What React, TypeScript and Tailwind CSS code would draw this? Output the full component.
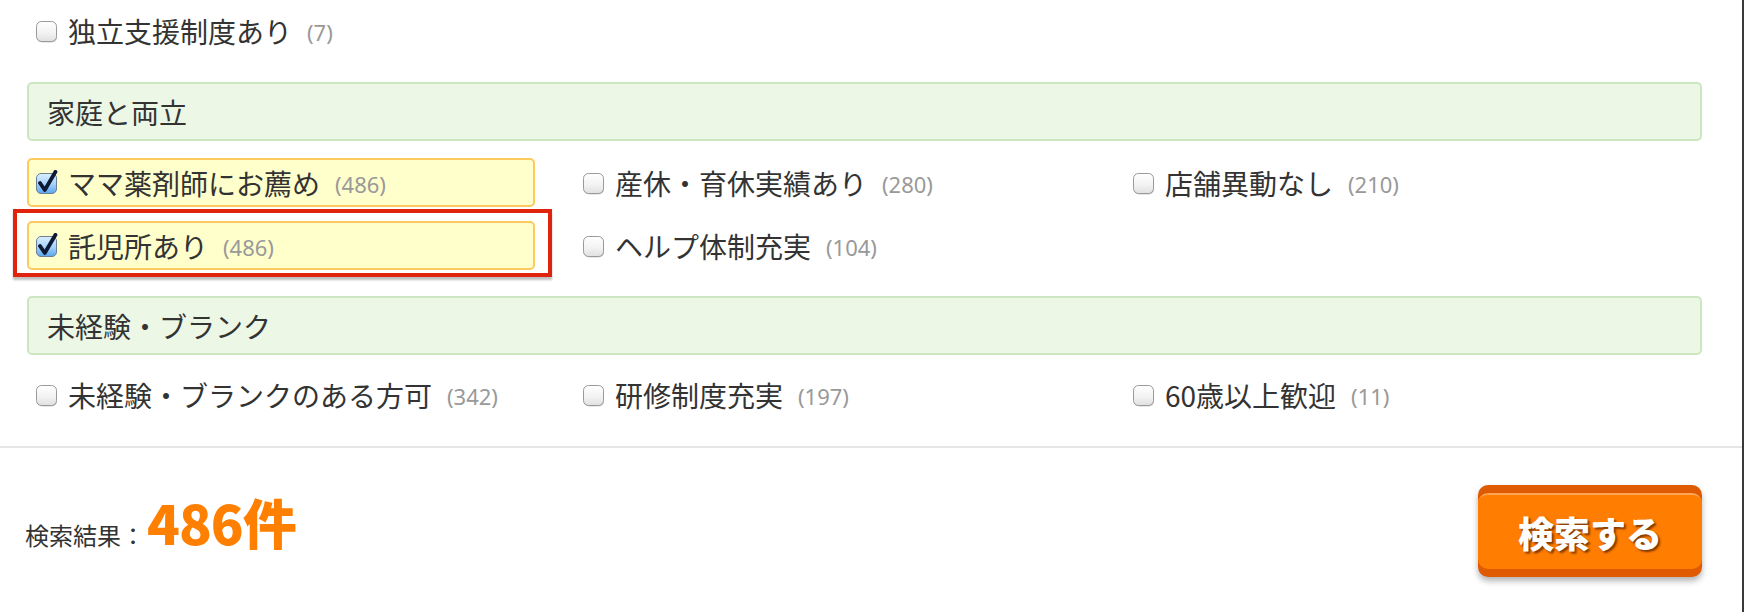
import React from "react";

function CheckBox({ checked }: { checked: boolean }) {
  if (checked) {
    return (
      <svg width="24" height="25" viewBox="0 0 24 25" className="shrink-0">
        <defs>
          <linearGradient id="cbBlue" x1="0" y1="0" x2="0" y2="1">
            <stop offset="0" stopColor="#dcefff" />
            <stop offset="0.5" stopColor="#a9d4fb" />
            <stop offset="1" stopColor="#5aa6ee" />
          </linearGradient>
        </defs>
        <rect x="1.5" y="3.5" width="20" height="20" rx="4.5" fill="url(#cbBlue)" stroke="#6c7f95" strokeWidth="1" />
        <path d="M5 13 L9.8 20 L20.5 1.8" fill="none" stroke="#0c1a33" strokeWidth="3.8" strokeLinecap="round" strokeLinejoin="round" />
      </svg>
    );
  }
  return (
    <svg width="24" height="25" viewBox="0 0 24 25" className="shrink-0">
      <defs>
        <linearGradient id="cbGray" x1="0" y1="0" x2="0" y2="1">
          <stop offset="0" stopColor="#ffffff" />
          <stop offset="0.55" stopColor="#f3f3f3" />
          <stop offset="1" stopColor="#e0e0e0" />
        </linearGradient>
      </defs>
      <rect x="2" y="4.5" width="20" height="20" rx="5" fill="#d2d2d2" />
      <rect x="1.5" y="3.5" width="20" height="20" rx="5" fill="url(#cbGray)" stroke="#999999" strokeWidth="1" />
    </svg>
  );
}

type ItemProps = {
  label: string;
  count: string;
  checked?: boolean;
  highlighted?: boolean;
  annotated?: boolean;
};

function Item({ label, count, checked = false, highlighted = false, annotated = false }: ItemProps) {
  return (
    <div className="relative w-[508px]">
      <div
        className={
          highlighted
            ? "flex h-[49px] items-center gap-[9px] rounded-[5px] border-2 border-[#fcca5f] bg-[#ffffcc] pl-[6px]"
            : "flex h-[49px] items-center gap-[9px] rounded-[5px] border-2 border-transparent pl-[6px]"
        }
      >
        <CheckBox checked={checked} />
        <span className="whitespace-nowrap text-[28px] leading-none text-[#333333]">{label}</span>
        <span className="ml-[6px] mt-[3px] whitespace-nowrap font-['Noto_Sans',sans-serif] text-[22px] leading-none text-[#999999]">
          {count}
        </span>
      </div>
      {annotated && (
        <div className="pointer-events-none absolute -left-[14px] -top-[12px] h-[68px] w-[539px] border-[4px] border-[#e0230d] shadow-[0_3px_2px_rgba(0,0,0,0.25)]" />
      )}
    </div>
  );
}

function Header({ title }: { title: string }) {
  return (
    <div className="flex h-[59px] items-center rounded-[5px] border-2 border-[#cde6c2] bg-[#ecf7e6] pl-[18px]">
      <span className="text-[28px] leading-none text-[#333333]">{title}</span>
    </div>
  );
}

export default function App() {
  return (
    <div className="flex h-[612px] w-[1744px] overflow-hidden bg-white font-['Noto_Sans_CJK_JP','Noto_Sans',sans-serif] text-[#333333]">
      <div className="flex flex-1 flex-col">
        <div className="flex flex-col pl-[27px] pr-[40px] pt-[6px]">
          <div className="grid grid-cols-[547px_550px_1fr]">
            <Item label="独立支援制度あり" count="(7)" />
          </div>

          <div className="mt-[27px]">
            <Header title="家庭と両立" />
          </div>

          <div className="mt-[17px] grid grid-cols-[547px_550px_1fr] gap-y-[14px]">
            <Item label="ママ薬剤師にお薦め" count="(486)" checked highlighted />
            <Item label="産休・育休実績あり" count="(280)" />
            <Item label="店舗異動なし" count="(210)" />
            <Item label="託児所あり" count="(486)" checked highlighted annotated />
            <Item label="ヘルプ体制充実" count="(104)" />
          </div>

          <div className="mt-[26px]">
            <Header title="未経験・ブランク" />
          </div>

          <div className="mt-[15px] grid grid-cols-[547px_550px_1fr]">
            <Item label="未経験・ブランクのある方可" count="(342)" />
            <Item label="研修制度充実" count="(197)" />
            <Item label="60歳以上歓迎" count="(11)" />
          </div>
        </div>

        <div className="mt-[27px] h-[2px] bg-[#e6e6e6]" />

        <div className="flex items-start justify-between pl-[25px] pr-[40px] pt-[37px]">
          <div className="mt-[10px] flex items-baseline">
            <span className="text-[24px] leading-none text-[#333333]">検索結果：</span>
            <span className="ml-[2px] text-[54px] font-black leading-none tracking-[-1px] text-[#ff7f00]">486件</span>
          </div>
          <button className="h-[92px] w-[224px] rounded-[10px] bg-[#df5a00] shadow-[0_4px_6px_rgba(0,0,0,0.3)]">
            <div className="flex h-[76px] items-center justify-center rounded-[10px] border-t-2 border-[#ffa450] bg-[#ff7d00]">
              <span className="text-[36px] font-black leading-none text-white [text-shadow:2px_2px_2px_rgba(80,30,0,0.7)]">
                検索する
              </span>
            </div>
          </button>
        </div>
      </div>
      <div className="w-[2px] bg-[#3a3a3a]" />
    </div>
  );
}
